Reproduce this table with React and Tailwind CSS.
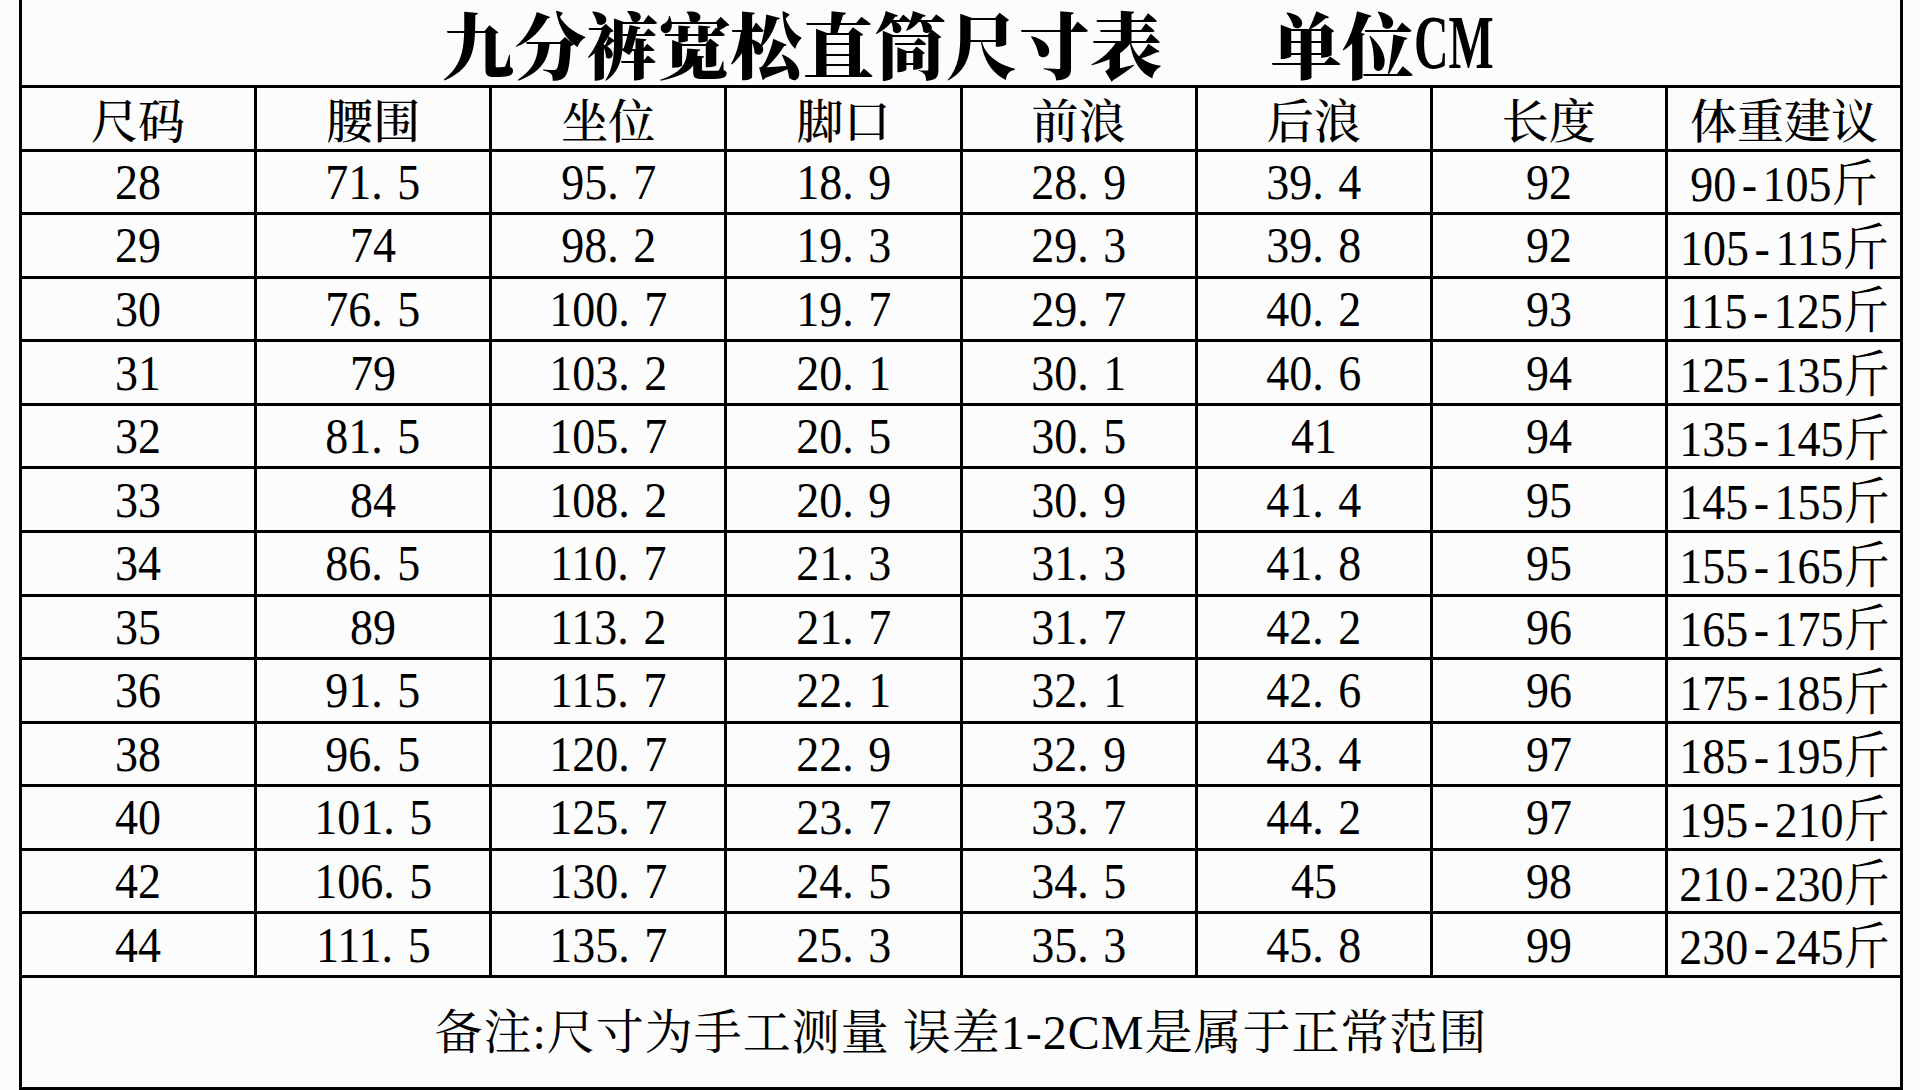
import React from "react";

const HEADERS = ["尺码", "腰围", "坐位", "脚口", "前浪", "后浪", "长度", "体重建议"];

const ROWS = [
  ["28", "71.5", "95.7", "18.9", "28.9", "39.4", "92", "90-105斤"],
  ["29", "74", "98.2", "19.3", "29.3", "39.8", "92", "105-115斤"],
  ["30", "76.5", "100.7", "19.7", "29.7", "40.2", "93", "115-125斤"],
  ["31", "79", "103.2", "20.1", "30.1", "40.6", "94", "125-135斤"],
  ["32", "81.5", "105.7", "20.5", "30.5", "41", "94", "135-145斤"],
  ["33", "84", "108.2", "20.9", "30.9", "41.4", "95", "145-155斤"],
  ["34", "86.5", "110.7", "21.3", "31.3", "41.8", "95", "155-165斤"],
  ["35", "89", "113.2", "21.7", "31.7", "42.2", "96", "165-175斤"],
  ["36", "91.5", "115.7", "22.1", "32.1", "42.6", "96", "175-185斤"],
  ["38", "96.5", "120.7", "22.9", "32.9", "43.4", "97", "185-195斤"],
  ["40", "101.5", "125.7", "23.7", "33.7", "44.2", "97", "195-210斤"],
  ["42", "106.5", "130.7", "24.5", "34.5", "45", "98", "210-230斤"],
  ["44", "111.5", "135.7", "25.3", "35.3", "45.8", "99", "230-245斤"],
];

const serif = "font-['Liberation_Serif','Noto_Serif_CJK_SC','Noto_Sans_CJK_SC',serif]";
const cjk = "font-['Noto_Serif_CJK_SC','Noto_Sans_CJK_SC',sans-serif]";

// the chart's font has a wide period and a long dash, so pad those
function Value({ text }) {
  const parts = [];
  text.split("").forEach((ch, i) => {
    if (ch === ".") parts.push(<span key={i} className="mr-[16px]">.</span>);
    else if (ch === "-") parts.push(<span key={i} className="mx-[6px]">-</span>);
    else if (ch === "斤") parts.push(<span key={i} className={cjk}>斤</span>);
    else parts.push(ch);
  });
  return (
    <span className={`inline-block scale-x-[0.92] whitespace-nowrap text-[50px] leading-[1.2] ${serif}`}>
      {parts}
    </span>
  );
}

function Cell({ children }) {
  return (
    <div className="flex h-[63.57px] items-center justify-center border-r-[3px] border-b-[3px] border-black">
      {children}
    </div>
  );
}

export default function App() {
  return (
    <div className="h-[1090px] w-[1920px] overflow-hidden bg-[#fcfcfc] text-black">
      <div className="ml-[19px] w-[1884px] border-l-[3px] border-black">
        <div className="flex h-[88px] items-center justify-center border-r-[3px] border-b-[3px] border-black pl-[14px]">
          <span className={`text-[72px] font-black leading-[1.15] ${cjk}`}>九分裤宽松直筒尺寸表</span>
          <span className={`ml-[108px] text-[72px] font-black leading-[1.15] ${cjk}`}>单位</span>
          <span className={`mr-[-47px] inline-block origin-left scale-x-[0.63] text-[76px] font-bold leading-[1.15] ${serif}`}>
            CM
          </span>
        </div>
        <div className="grid grid-cols-8">
          {HEADERS.map((h) => (
            <Cell key={h}>
              <span className={`text-[47px] font-medium leading-[1.2] ${cjk}`}>{h}</span>
            </Cell>
          ))}
          {ROWS.map((row) =>
            row.map((v, i) => (
              <Cell key={row[0] + "-" + i}>
                <Value text={v} />
              </Cell>
            ))
          )}
        </div>
        <div className="flex h-[112px] items-center justify-center border-r-[3px] border-b-[3px] border-black">
          <span className={`text-[48px] leading-[1.2] tracking-[1px] ${serif}`}>
            备注:尺寸为手工测量 误差1-2CM是属于正常范围
          </span>
        </div>
      </div>
    </div>
  );
}
